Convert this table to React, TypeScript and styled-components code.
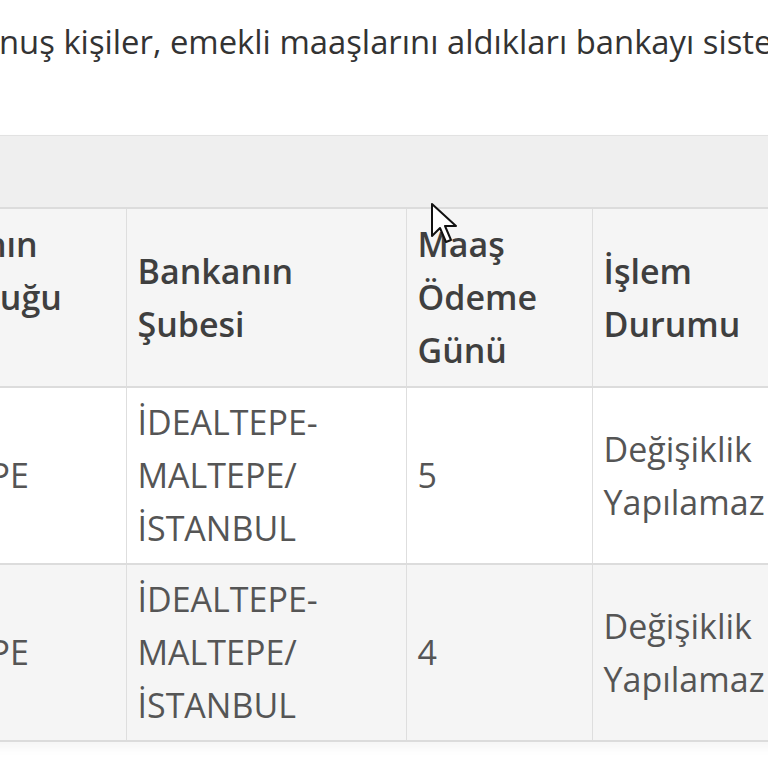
import React from "react";
import styled, { createGlobalStyle } from "styled-components";

const Global = createGlobalStyle`
  html, body { margin: 0; padding: 0; background: #fff; }
  body { font-family: "Open Sans", "Noto Sans", sans-serif; color: #333; }
`;

const Page = styled.div`
  position: relative;
  width: 768px;
  height: 768px;
  overflow: hidden;
  background: #fff;
`;

const Intro = styled.p`
  margin: 0;
  padding-top: 15px;
  height: 120px;
  font-size: 32.8px;
  line-height: 53px;
  color: #333;
  white-space: nowrap;
  text-indent: -1px;
`;

const Panel = styled.div`
  margin-left: -129px;
  width: 920px;
  box-shadow: 0 6px 10px rgba(0, 0, 0, 0.04);
`;

const PanelHeading = styled.div`
  height: 71px;
  background: #efefef;
  border-top: 1px solid #e2e2e2;
`;

const Table = styled.table`
  border-collapse: collapse;
  table-layout: fixed;
  width: 920px;
  font-size: 34px;
  line-height: 53px;
`;

const HeadCell = styled.th`
  text-align: left;
  font-weight: 600;
  color: #3f3f3f;
  background: #f5f5f5;
  padding: 9px 11px;
  vertical-align: middle;
  border-top: 2px solid #dcdcdc;
  border-bottom: 2px solid #dcdcdc;
  border-right: 1px solid #dedede;
`;

const Row = styled.tr<{ $striped?: boolean }>`
  background: ${(p) => (p.$striped ? "#f5f5f5" : "#fff")};
`;

const Cell = styled.td`
  color: #555;
  padding: 8px 11px;
  vertical-align: middle;
  border-bottom: 2px solid #dcdcdc;
  border-right: 1px solid #dedede;
`;

const Cursor = styled.svg`
  position: absolute;
  left: 430px;
  top: 202px;
  width: 30px;
  height: 44px;
`;

const rows = [
  { city: "MALTEPE", branch: "İDEALTEPE-MALTEPE/ İSTANBUL", day: "5", status: "Değişiklik Yapılamaz" },
  { city: "MALTEPE", branch: "İDEALTEPE-MALTEPE/ İSTANBUL", day: "4", status: "Değişiklik Yapılamaz" },
];

export default function App() {
  return (
    <Page>
      <Global />
      <Intro>nuş kişiler, emekli maaşlarını aldıkları bankayı sistem üzerinden görüntüleyebilir.</Intro>
      <Panel>
        <PanelHeading />
        <Table>
          <colgroup>
            <col style={{ width: 255 }} />
            <col style={{ width: 280 }} />
            <col style={{ width: 186 }} />
            <col style={{ width: 199 }} />
          </colgroup>
          <thead>
            <tr>
              <HeadCell>Bankanın Bulunduğu İlçe</HeadCell>
              <HeadCell>Bankanın Şubesi</HeadCell>
              <HeadCell>Maaş Ödeme Günü</HeadCell>
              <HeadCell>İşlem Durumu</HeadCell>
            </tr>
          </thead>
          <tbody>
            {rows.map((r, i) => (
              <Row key={i} $striped={i % 2 === 1}>
                <Cell>{r.city}</Cell>
                <Cell>{r.branch}</Cell>
                <Cell>{r.day}</Cell>
                <Cell>{r.status}</Cell>
              </Row>
            ))}
          </tbody>
        </Table>
      </Panel>
      <Cursor viewBox="0 0 15 22">
        <path d="M1 1 L1 17 L5 13 L8 20 L10.5 19 L7.5 12 L13 12 Z" fill="#fff" stroke="#111" strokeWidth="1" strokeLinejoin="round" />
      </Cursor>
    </Page>
  );
}
